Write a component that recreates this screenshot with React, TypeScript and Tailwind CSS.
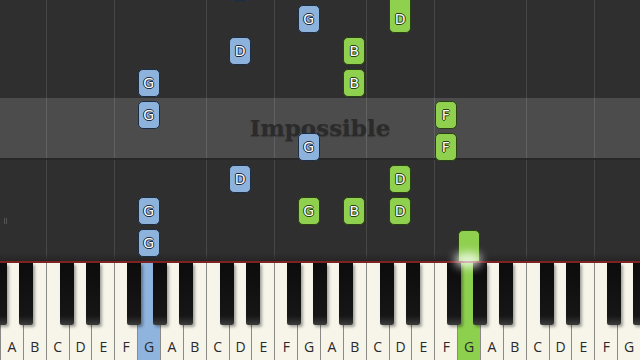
import React from 'react';

const KEY = 640 / 28;
const LETTERS = ['A', 'B', 'C', 'D', 'E', 'F', 'G'];

type Note = { col: number; top: number; h?: number; hand: 'l' | 'r'; bare?: boolean };

const notes: Note[] = [
  // left hand (blue)
  { col: 10, top: -27, hand: 'l', bare: true },
  { col: 13, top: 5, hand: 'l' },
  { col: 10, top: 37, hand: 'l' },
  { col: 6, top: 69, hand: 'l' },
  { col: 6, top: 101, hand: 'l' },
  { col: 13, top: 133, hand: 'l' },
  { col: 10, top: 165, hand: 'l' },
  { col: 6, top: 197, hand: 'l' },
  { col: 6, top: 229, hand: 'l' },
  // right hand (green)
  { col: 17, top: -30, h: 63, hand: 'r' },
  { col: 15, top: 37, hand: 'r' },
  { col: 15, top: 69, hand: 'r' },
  { col: 19, top: 101, hand: 'r' },
  { col: 19, top: 133, hand: 'r' },
  { col: 17, top: 165, hand: 'r' },
  { col: 13, top: 197, hand: 'r' },
  { col: 15, top: 197, hand: 'r' },
  { col: 17, top: 197, hand: 'r' },
  { col: 20, top: 230, h: 40, hand: 'r', bare: true },
];

// grid lines sit left of every C and F
const gridLines = [2, 5, 9, 12, 16, 19, 23, 26].map((i) => i * KEY);

// black key offsets from the left edge of C
const blackOffsets = [14.3, 40.3, 81.3, 107.3, 133.3];
const blackKeys: number[] = [];
for (let k = -1; k <= 3; k++) {
  blackOffsets.forEach((o) => blackKeys.push(2 * KEY + k * 160 + o));
}

const pressed: Record<number, 'l' | 'r'> = { 6: 'l', 20: 'r' };

function NoteBlock({ n }: { n: Note }) {
  const blue = n.hand === 'l';
  return (
    <div
      className={
        'absolute z-20 flex items-end justify-center rounded-[5px] border-[1.5px] pb-[5px] ' +
        (blue ? 'border-[#1c2e45] bg-[#8db3dc]' : 'border-[#2a4212] bg-[#8fd04f]')
      }
      style={{ left: n.col * KEY + 0.5, top: n.top, width: 22, height: n.h ?? 28 }}
    >
      {!n.bare && (
        <span
          className={
            'font-["DejaVu_Sans",sans-serif] text-[14px] leading-[15px] text-white ' +
            (blue
              ? '[text-shadow:-1px_0_#1a2a3e,1px_0_#1a2a3e,0_-1px_#1a2a3e,0_1px_#1a2a3e]'
              : '[text-shadow:-1px_0_#26400e,1px_0_#26400e,0_-1px_#26400e,0_1px_#26400e]')
          }
        >
          {LETTERS[n.col % 7]}
        </span>
      )}
    </div>
  );
}

export default function App() {
  return (
    <div className="relative h-[360px] w-[640px] overflow-hidden bg-[#1a1a1a]">
      {/* falling notes */}
      <div className="relative flex h-[261px] flex-col overflow-hidden bg-[#2f2f2f]">
        {gridLines.map((x) => (
          <div key={x} className="absolute top-0 bottom-0 w-px bg-[#474747]" style={{ left: x }} />
        ))}
        <div className="h-[98px]" />
        <div className="relative z-10 flex h-[62px] items-center justify-center border-b-2 border-[#282828] bg-white/[0.14]">
          <span className="font-['DejaVu_Serif',serif] text-[23px] font-bold text-[#2b2b2b] [text-shadow:0_1px_1px_rgba(0,0,0,0.25)]">
            Impossible
          </span>
        </div>
        <div className="relative z-10 ml-[4px] mt-[58px] flex gap-[1px]">
          <div className="h-[6px] w-px bg-[#555]" />
          <div className="h-[6px] w-px bg-[#555]" />
        </div>
        <div className="absolute right-0 bottom-0 left-0 h-[8px] bg-gradient-to-b from-transparent to-[#252525]" />
        {notes.map((n, i) => (
          <NoteBlock key={i} n={n} />
        ))}
      </div>
      <div className="h-[2px] bg-[#7e2222]" />

      {/* keyboard */}
      <div className="relative flex h-[97px]">
        {Array.from({ length: 28 }, (_, i) => (
          <div
            key={i}
            className={
              'flex flex-1 items-end justify-center border-l border-[#8b8b85] pb-[3px] font-["Open_Sans",sans-serif] text-[14px] text-[#2a2a2a] ' +
              (pressed[i] === 'l' ? 'bg-[#8fb4de]' : pressed[i] === 'r' ? 'bg-[#8dd04e]' : 'bg-[#f7f5ea]')
            }
          >
            {LETTERS[i % 7]}
          </div>
        ))}
        {blackKeys.map((x) => (
          <div
            key={x}
            className="absolute top-0 h-[62px] w-[14px] rounded-b-[2px] bg-gradient-to-b from-[#0c0c0c] via-[#161616] via-85% to-[#3c3c3c] shadow-[2px_2px_3px_rgba(0,0,0,0.35)]"
            style={{ left: x }}
          />
        ))}
      </div>

      {/* glow where the green note hits the key */}
      <div className="absolute top-[253px] left-[455px] z-30 h-[14px] w-[26px] rounded-full bg-white/80 blur-[5px]" />
    </div>
  );
}
